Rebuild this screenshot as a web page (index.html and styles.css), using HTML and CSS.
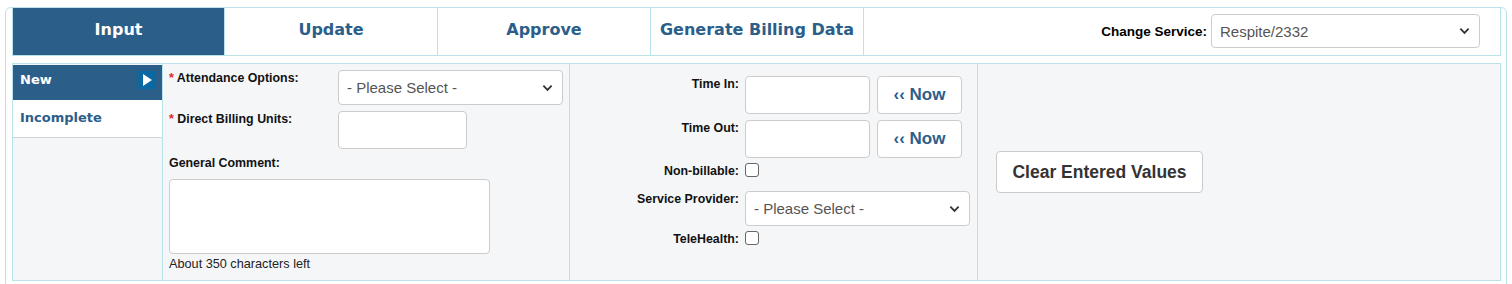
FILE: index.html
```html
<!DOCTYPE html>
<html>
<head>
<meta charset="utf-8">
<link rel="stylesheet" href="styles.css">
</head>
<body>
<div class="frame">
  <div class="tabbar">
    <div class="tab active">Input</div>
    <div class="tab">Update</div>
    <div class="tab">Approve</div>
    <div class="tab">Generate Billing Data</div>
    <div class="service">
      <span class="service-label">Change Service:</span>
      <div class="select service-select"><span>Respite/2332</span><svg class="chev" viewBox="0 0 12 8"><path d="M1.5 1.5 L6 6 L10.5 1.5" fill="none" stroke="#333" stroke-width="2"/></svg></div>
    </div>
  </div>
  <div class="content">
    <div class="nav">
      <div class="nav-item current"><span>New</span><span class="arrow"><svg viewBox="0 0 18 18"><path d="M5 3 L14 9 L5 15 Z" fill="#fff"/></svg></span></div>
      <div class="nav-item">Incomplete</div>
    </div>
    <div class="col col2">
      <div class="row r-att">
        <label class="lbl"><span class="req">*</span> Attendance Options:</label>
        <div class="select att-select"><span>- Please Select -</span><svg class="chev" viewBox="0 0 12 8"><path d="M1.5 1.5 L6 6 L10.5 1.5" fill="none" stroke="#333" stroke-width="2"/></svg></div>
      </div>
      <div class="row r-units">
        <label class="lbl"><span class="req">*</span> Direct Billing Units:</label>
        <div class="input units"></div>
      </div>
      <label class="lbl gc">General Comment:</label>
      <div class="input comment"></div>
      <div class="chars">About 350 characters left</div>
    </div>
    <div class="col col3">
      <div class="trow t-in">
        <label class="rlbl">Time In:</label>
        <div class="input time"></div>
        <button class="now">‹‹ Now</button>
      </div>
      <div class="trow t-out">
        <label class="rlbl">Time Out:</label>
        <div class="input time"></div>
        <button class="now">‹‹ Now</button>
      </div>
      <div class="trow t-nb">
        <label class="rlbl">Non-billable:</label>
        <span class="check"></span>
      </div>
      <div class="trow t-sp">
        <label class="rlbl">Service Provider:</label>
        <div class="select sp-select"><span>- Please Select -</span><svg class="chev" viewBox="0 0 12 8"><path d="M1.5 1.5 L6 6 L10.5 1.5" fill="none" stroke="#333" stroke-width="2"/></svg></div>
      </div>
      <div class="trow t-th">
        <label class="rlbl">TeleHealth:</label>
        <span class="check"></span>
      </div>
    </div>
    <div class="col col4">
      <button class="clear">Clear Entered Values</button>
    </div>
  </div>
</div>
</body>
</html>
```
FILE: styles.css
```css
* { box-sizing: border-box; }
html, body { margin: 0; padding: 0; background: #fff; }
body { width: 1512px; height: 284px; overflow: hidden; font-family: "Liberation Sans", Arial, sans-serif; }

.frame {
  margin: 7px 5px 0 5px;
  width: 1502px;
  height: 282px;
  border: 1px solid #b8e3ea;
  border-radius: 6px;
  padding: 0 5px 0 6px;
}

.tabbar {
  display: flex;
  height: 48px;
  border: 1px solid #b8e3ea;
  border-top: none;
}
.tab {
  width: 213px;
  height: 47px;
  display: flex;
  align-items: center;
  justify-content: center;
  font-family: "DejaVu Sans", Verdana, sans-serif;
  font-weight: bold;
  font-size: 16px;
  color: #2c5e8a;
  border-right: 1px solid #b8e3ea;
  padding-bottom: 4px;
}
.tab.active { background: #2c5e8a; color: #fff; width: 212px; }
.service {
  flex: 1;
  display: flex;
  align-items: center;
  justify-content: flex-end;
  padding-right: 20px;
}
.service-label { font-weight: bold; font-size: 13.5px; color: #000; margin-right: 4px; }
.select {
  display: flex;
  align-items: center;
  justify-content: space-between;
  background: #fff;
  border: 1px solid #ccc;
  border-radius: 4px;
  padding: 0 9px 0 8px;
  font-size: 15px;
  color: #555;
}
.chev { width: 11px; height: 8px; }
.service-select { width: 269px; height: 34px; margin-top: -1px; }

.content {
  margin-top: 7px;
  height: 218px;
  border: 1px solid #b8e3ea;
  background: #f5f6f8;
  display: grid;
  grid-template-columns: 149px 407px 408px 1fr;
}
.col { border-left: 1px solid #b8e3ea; height: 100%; }

.nav { padding-top: 1px; }
.nav-item {
  height: 38px;
  background: #fff;
  border-bottom: 1px solid #d4d4d4;
  display: flex;
  align-items: flex-start;
  justify-content: space-between;
  font-family: "DejaVu Sans", Verdana, sans-serif;
  font-weight: bold;
  font-size: 13px;
  color: #2c5e8a;
  padding: 10px 6px 0 7px;
}
.nav-item.current {
  height: 35px;
  background: #2c5e8a;
  color: #fff;
  border-bottom: none;
  padding-top: 7px;
}
.arrow {
  width: 18px;
  height: 18px;
  background: #0c68a0;
  margin-top: -1px;
  display: block;
}
.arrow svg { width: 18px; height: 18px; display: block; }

.lbl { font-weight: bold; font-size: 12.4px; color: #111; display: block; }
.req { color: #e0252b; }
.col2 { padding: 6px 0 0 6px; }
.row { display: flex; }
.row .lbl { width: 169px; padding-top: 1px; }
.att-select { width: 225px; height: 35px; }
.r-units { margin-top: 6px; }
.units { width: 129px; height: 38px; }
.input { background: #fff; border: 1px solid #ccc; border-radius: 4px; }
.gc { margin-top: 7px; }
.comment { width: 321px; height: 75px; margin-top: 9px; }
.chars { font-size: 12.7px; color: #222; margin-top: 3px; }

.col3 { padding-top: 12px; }
.trow { display: flex; align-items: flex-start; }
.rlbl { width: 169px; text-align: right; font-weight: bold; font-size: 12.4px; color: #111; padding-top: 1px; margin-right: 6px; }
.time { width: 125px; height: 38px; }
.now {
  width: 85px; height: 38px; margin-left: 7px;
  background: #fff; border: 1px solid #ccc; border-radius: 4px;
  font-family: "Liberation Sans", Arial, sans-serif;
  font-weight: bold; font-size: 17px; color: #2c5e8a;
  padding: 0;
}
.t-out { margin-top: 6px; }
.check {
  display: block; width: 14px; height: 14px;
  border: 1px solid #666; border-radius: 3px; background: #fff;
}
.t-nb { margin-top: 5px; }
.t-sp { margin-top: 13px; }
.sp-select { width: 225px; height: 35px; }
.t-th { margin-top: 5px; }

.col4 { display: flex; align-items: center; padding-left: 18px; }
.clear {
  width: 207px; height: 42px;
  background: #fff; border: 1px solid #ccc; border-radius: 4px;
  font-family: "Liberation Sans", Arial, sans-serif;
  font-weight: bold; font-size: 17.5px; color: #333;
  padding: 0;
}
```
